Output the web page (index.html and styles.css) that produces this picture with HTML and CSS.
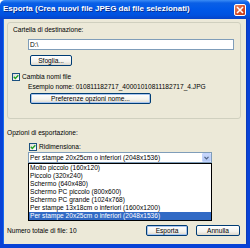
FILE: index.html
```html
<!DOCTYPE html>
<html lang="it">
<head>
  <meta charset="UTF-8" />
  <title>Esporta</title>
  <link rel="stylesheet" href="styles.css">
</head>
<body>
  <div class="window">
    <div class="titlebar">
      <span class="title">Esporta (Crea nuovi file JPEG dai file selezionati)</span>
      <span class="close">
        <svg width="8" height="8" viewBox="0 0 8 8"><path d="M1 1 L7 7 M7 1 L1 7" stroke="#fff" stroke-width="1.6" /></svg>
      </span>
    </div>

    <div class="frame">
      <div class="group">
        <div class="text">Cartella di destinazione:</div>
        <div class="textbox">D:\</div>
        <button class="btn btn-browse">Sfoglia...</button>

        <div class="check-row rename">
          <span class="checkbox">
            <svg width="6" height="6" viewBox="0 0 6 6"><path d="M0.8 2.8 L2.3 4.4 L5.3 1.2" stroke="#21a121" stroke-width="1.4" fill="none" /></svg>
          </span>
          <span class="text">Cambia nomi file</span>
        </div>
        <div class="text example">Esempio nome: 010811182717_40001010811182717_4.JPG</div>
        <button class="btn btn-focus btn-prefs">Preferenze opzioni nome...</button>
      </div>

      <div class="text options">Opzioni di esportazione:</div>
      <div class="check-row resize">
        <span class="checkbox">
          <svg width="6" height="6" viewBox="0 0 6 6"><path d="M0.8 2.8 L2.3 4.4 L5.3 1.2" stroke="#21a121" stroke-width="1.4" fill="none" /></svg>
        </span>
        <span class="text">Ridimensiona:</span>
      </div>

      <div class="combo">
        <span class="combo-value">Per stampe 20x25cm o inferiori (2048x1536)</span>
        <span class="combo-arrow">
          <svg width="5" height="4" viewBox="0 0 5 4"><path d="M0.5 0.8 L2.5 2.8 L4.5 0.8" stroke="#4d6185" stroke-width="1.2" fill="none" /></svg>
        </span>
        <ul class="combo-list">
          <li>Molto piccolo (160x120)</li>
          <li>Piccolo (320x240)</li>
          <li>Schermo (640x480)</li>
          <li>Schermo PC piccolo (800x600)</li>
          <li>Schermo PC grande (1024x768)</li>
          <li>Per stampe 13x18cm o inferiori (1600x1200)</li>
          <li class="selected">Per stampe 20x25cm o inferiori (2048x1536)</li>
        </ul>
      </div>

      <div class="bottom">
        <span class="text">Numero totale di file: 10</span>
        <div class="actions">
          <button class="btn btn-focus btn-export">Esporta</button>
          <button class="btn btn-cancel">Annulla</button>
        </div>
      </div>
    </div>
  </div>
</body>
</html>
```

FILE: styles.css
```css
body {
  margin: 0;
  padding: 0;
  font-family: "Liberation Sans", Arial, sans-serif;
  font-size: 6.6px;
  line-height: 8px;
  color: #000;
  background: #fff;
}

.window {
  width: 250px;
  height: 248px;
  display: flex;
  flex-direction: column;
}

.titlebar {
  height: 19px;
  display: flex;
  align-items: center;
  justify-content: space-between;
  padding: 0 4px 1px 3px;
  box-sizing: border-box;
  background: linear-gradient(#3b8cf5 0, #0a5fe6 3px, #0058e8 9px, #0052e0 15px, #0743c8 19px);
  border-radius: 5px 5px 0 0;
}

.title {
  color: #fff;
  font-weight: bold;
  font-size: 8px;
  text-shadow: 1px 1px 0 #0a2d8c;
}

.close {
  width: 12px;
  height: 12px;
  box-sizing: border-box;
  border: 1px solid #fff;
  border-radius: 2px;
  background: linear-gradient(135deg, #e98a6a, #d44a24 60%, #c03a18);
  display: flex;
  align-items: center;
  justify-content: center;
  margin-top: 1px;
}

.frame {
  flex: 1;
  display: flex;
  flex-direction: column;
  background-color: #ece9d8;
  border-left: 3px solid #0842d6;
  border-right: 3px solid #0842d6;
  border-bottom: 4px solid #0842d6;
  box-shadow: inset 1px 0 0 #166aee, inset -1px 0 0 #0b3ab8;
}

.group {
  margin: 3px 0 0 4px;
  width: 234px;
  height: 97px;
  box-sizing: border-box;
  border: 1px solid #d0d0bf;
  border-radius: 3px;
  padding: 3px 0 0 5px;
  flex-shrink: 0;
}

.text {
  display: block;
  white-space: nowrap;
}

.textbox {
  margin: 5px 0 0 15px;
  width: 206px;
  height: 11px;
  box-sizing: border-box;
  border: 1px solid #7f9db9;
  background: #fff;
  padding-left: 1px;
  line-height: 9px;
}

.btn {
  display: block;
  height: 11px;
  box-sizing: border-box;
  padding: 0;
  font-family: "Liberation Sans", Arial, sans-serif;
  font-size: 6.6px;
  line-height: 9px;
  color: #000;
  border: 1px solid #003c74;
  border-radius: 2px;
  background: linear-gradient(#ffffff, #f4f3ee 60%, #dcd8cb);
}

.btn-focus {
  box-shadow: inset 0 0 0 1px #a8c5ef;
}

.btn-browse {
  margin: 5px 0 0 17px;
  width: 42px;
}

.check-row {
  display: flex;
  align-items: center;
  gap: 2px;
  height: 8px;
}

.checkbox {
  width: 8px;
  height: 8px;
  box-sizing: border-box;
  border: 1px solid #1c5180;
  background: linear-gradient(135deg, #dcdcd7, #ffffff);
  display: flex;
  align-items: center;
  justify-content: center;
}

.rename {
  margin: 7px 0 0 -1px;
}

.example {
  margin: 2px 0 0 15px;
}

.btn-prefs {
  margin: 2px 0 0 17px;
  width: 121px;
}

.options {
  margin: 10px 0 0 4px;
}

.resize {
  margin: 6px 0 0 26px;
}

.combo {
  position: relative;
  margin: 1px 0 0 25px;
  width: 184px;
  height: 11px;
  box-sizing: border-box;
  border: 1px solid #7f9db9;
  background: #fff;
  display: flex;
  align-items: center;
  justify-content: space-between;
  padding-left: 1px;
}

.combo-value {
  white-space: nowrap;
  line-height: 9px;
}

.combo-arrow {
  width: 9px;
  height: 9px;
  box-sizing: border-box;
  border: 1px solid #c3d3fd;
  border-radius: 1px;
  background: linear-gradient(#c8d8fb, #b1c7f5);
  display: flex;
  align-items: center;
  justify-content: center;
}

.combo-list {
  position: absolute;
  top: 10px;
  left: -1px;
  width: 184px;
  margin: 0;
  padding: 0;
  list-style: none;
  background: #fff;
  border: 1px solid #000;
  box-sizing: border-box;
}

.combo-list li {
  height: 8px;
  line-height: 8px;
  padding-left: 1px;
  white-space: nowrap;
  overflow: hidden;
}

.combo-list .selected {
  background-color: #316ac5;
  color: #fff;
}

.bottom {
  margin-top: auto;
  padding: 0 7px 8px 4px;
  display: flex;
  align-items: center;
  justify-content: space-between;
}

.actions {
  display: flex;
  gap: 8px;
}

.btn-export {
  width: 42px;
}

.btn-cancel {
  width: 44px;
}
```
